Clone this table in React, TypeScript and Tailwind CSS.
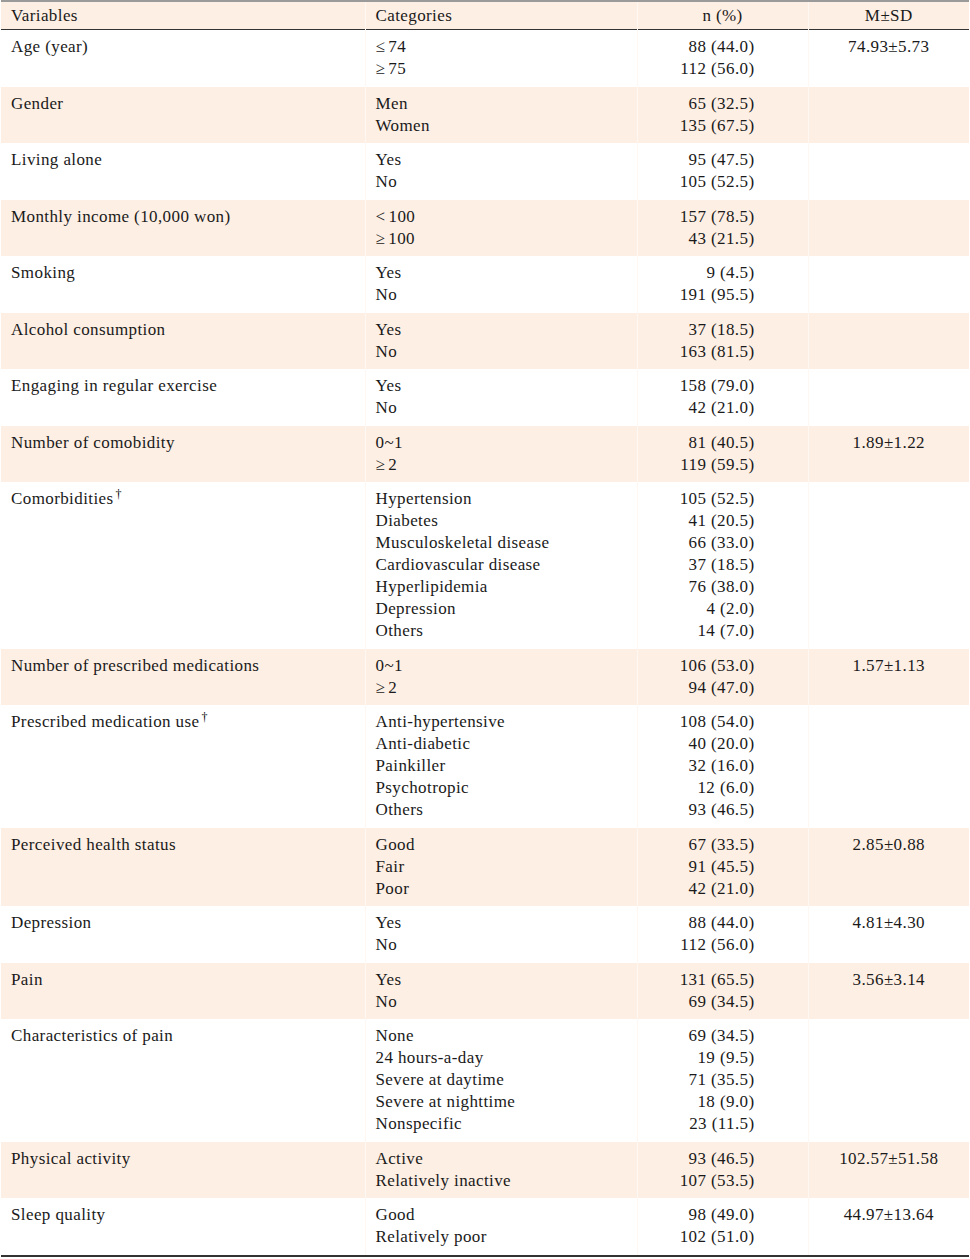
import React from "react";

type Row = { v: string; sup?: boolean; cats: string[]; ns: string[]; m?: string };

const ROWS: Row[] = [
  { v: "Age (year)", cats: ["≤74", "≥75"], ns: ["88 (44.0)", "112 (56.0)"], m: "74.93±5.73" },
  { v: "Gender", cats: ["Men", "Women"], ns: ["65 (32.5)", "135 (67.5)"] },
  { v: "Living alone", cats: ["Yes", "No"], ns: ["95 (47.5)", "105 (52.5)"] },
  { v: "Monthly income (10,000 won)", cats: ["<100", "≥100"], ns: ["157 (78.5)", "43 (21.5)"] },
  { v: "Smoking", cats: ["Yes", "No"], ns: ["9 (4.5)", "191 (95.5)"] },
  { v: "Alcohol consumption", cats: ["Yes", "No"], ns: ["37 (18.5)", "163 (81.5)"] },
  { v: "Engaging in regular exercise", cats: ["Yes", "No"], ns: ["158 (79.0)", "42 (21.0)"] },
  { v: "Number of comobidity", cats: ["0~1", "≥2"], ns: ["81 (40.5)", "119 (59.5)"], m: "1.89±1.22" },
  {
    v: "Comorbidities",
    sup: true,
    cats: ["Hypertension", "Diabetes", "Musculoskeletal disease", "Cardiovascular disease", "Hyperlipidemia", "Depression", "Others"],
    ns: ["105 (52.5)", "41 (20.5)", "66 (33.0)", "37 (18.5)", "76 (38.0)", "4 (2.0)", "14 (7.0)"],
  },
  { v: "Number of prescribed medications", cats: ["0~1", "≥2"], ns: ["106 (53.0)", "94 (47.0)"], m: "1.57±1.13" },
  {
    v: "Prescribed medication use",
    sup: true,
    cats: ["Anti-hypertensive", "Anti-diabetic", "Painkiller", "Psychotropic", "Others"],
    ns: ["108 (54.0)", "40 (20.0)", "32 (16.0)", "12 (6.0)", "93 (46.5)"],
  },
  { v: "Perceived health status", cats: ["Good", "Fair", "Poor"], ns: ["67 (33.5)", "91 (45.5)", "42 (21.0)"], m: "2.85±0.88" },
  { v: "Depression", cats: ["Yes", "No"], ns: ["88 (44.0)", "112 (56.0)"], m: "4.81±4.30" },
  { v: "Pain", cats: ["Yes", "No"], ns: ["131 (65.5)", "69 (34.5)"], m: "3.56±3.14" },
  {
    v: "Characteristics of pain",
    cats: ["None", "24 hours-a-day", "Severe at daytime", "Severe at nighttime", "Nonspecific"],
    ns: ["69 (34.5)", "19 (9.5)", "71 (35.5)", "18 (9.0)", "23 (11.5)"],
  },
  { v: "Physical activity", cats: ["Active", "Relatively inactive"], ns: ["93 (46.5)", "107 (53.5)"], m: "102.57±51.58" },
  { v: "Sleep quality", cats: ["Good", "Relatively poor"], ns: ["98 (49.0)", "102 (51.0)"], m: "44.97±13.64" },
];

// relation signs (≤ ≥ <) sit a little apart from the number in the source
function Cat({ c }: { c: string }) {
  const m = c.match(/^([≤≥<])(.*)$/);
  if (!m) return <div>{c}</div>;
  return (
    <div>
      <span className="mr-[3px]">{m[1]}</span>
      {m[2]}
    </div>
  );
}

export default function App() {
  return (
    <div className="min-h-[1259px] bg-white pl-[1px] font-['Liberation_Serif',serif] text-[17px] leading-[22px] tracking-[0.4px] text-[#1a1a1a]">
      <table className="w-[968px] table-fixed border-collapse border-t-2 border-b-2 border-t-[#9a9a9a] border-b-[#333]">
        <colgroup>
          <col className="w-[364px]" />
          <col className="w-[272px]" />
          <col className="w-[171px]" />
          <col className="w-[161px]" />
        </colgroup>
        <thead>
          <tr className="border-b border-[#333] bg-[#fdefe4]">
            <th className="border-r border-[#fff7f1] px-[10px] pt-[3px] pb-[2px] text-left font-normal">Variables</th>
            <th className="border-r border-[#fff7f1] px-[10px] pt-[3px] pb-[2px] text-left font-normal">Categories</th>
            <th className="border-r border-[#fff7f1] px-[10px] pt-[3px] pb-[2px] text-center font-normal">n (%)</th>
            <th className="px-[10px] pt-[3px] pb-[2px] text-center font-normal">M±SD</th>
          </tr>
        </thead>
        <tbody>
          {ROWS.map((r, i) => (
            <tr key={r.v} className={i % 2 === 1 ? "bg-[#fdefe4]" : ""}>
              <td className="border-r border-[#fff7f1] px-[10px] pt-[6px] pb-[6.5px] align-top">
                {r.v}
                {r.sup ? <sup className="ml-[2px] text-[12px] text-black">†</sup> : null}
              </td>
              <td className="border-r border-[#fff7f1] px-[10px] pt-[6px] pb-[6.5px] align-top">
                {r.cats.map((c) => <Cat key={c} c={c} />)}
              </td>
              <td className="border-r border-[#fff7f1] pr-[53px] pt-[6px] pb-[6.5px] text-right align-top">
                {r.ns.map((n, k) => <div key={k}>{n}</div>)}
              </td>
              <td className="px-[10px] pt-[6px] pb-[6.5px] text-center align-top">{r.m ?? ""}</td>
            </tr>
          ))}
        </tbody>
      </table>
    </div>
  );
}
